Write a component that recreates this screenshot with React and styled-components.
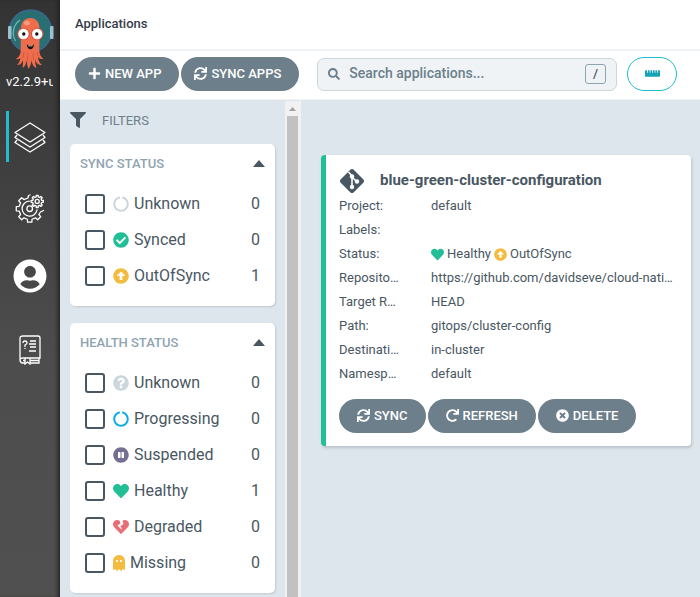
import React from "react";
import styled, { createGlobalStyle } from "styled-components";
import {
  FaPlus, FaSync, FaRedo, FaTimesCircle, FaCircleNotch, FaCheckCircle,
  FaArrowAltCircleUp, FaQuestionCircle, FaPauseCircle, FaHeart,
  FaHeartBroken, FaGhost, FaFilter, FaSearch, FaRulerHorizontal, FaUserCircle,
} from "react-icons/fa";

const color = {
  slate: "#495763",
  button: "#6d7f8b",
  muted: "#8fa4b1",
  ground: "#dee6ed",
  line: "#eff3f6",
  cyan: "#1fbdd0",
  teal: "#22be95",
  amber: "#f4bb41",
};

const GlobalStyle = createGlobalStyle`
  * { box-sizing: border-box; }
  body {
    margin: 0;
    background: ${color.ground};
    color: ${color.slate};
    font-family: Roboto, sans-serif;
    font-size: 13px;
  }
`;

const Shell = styled.div`
  display: grid;
  grid-template-columns: 60px minmax(0, 1fr);
  height: 100vh;
  overflow: hidden;
`;

const Sidebar = styled.nav`
  display: flex;
  flex-direction: column;
  align-items: center;
  padding-top: 9px;
  background: linear-gradient(to bottom, #333333, #4d4d4d 60%, #505050);
  box-shadow: inset -4px 0 4px -2px #23211f;
`;

const Version = styled.div`
  width: 48px;
  height: 20px;
  margin: 2px 0 19px;
  padding-right: 1px;
  overflow: hidden;
  overflow: clip;
  overflow-clip-margin: content-box;
  color: #ffffff;
  line-height: 20px;
  white-space: nowrap;
`;

const NavLink = styled.a`
  display: flex;
  align-items: center;
  justify-content: center;
  align-self: stretch;
  height: 51px;
  margin: 0 6px ${(p) => p.$after || 20}px;
  padding: 3px 3px 0 0;
  border-left: 3px solid ${(p) => (p.$active ? color.cyan : "transparent")};
  color: #ffffff;
`;

const Main = styled.div`
  display: flex;
  flex-direction: column;
  min-width: 0;
  min-height: 0;
`;

const PageTitle = styled.header`
  height: 51px;
  padding: 0 15px;
  border-bottom: 2px solid ${color.line};
  background: #ffffff;
  color: #363c4a;
  font-weight: 500;
  line-height: 48px;
`;

const Toolbar = styled.div`
  display: flex;
  align-items: center;
  height: 49px;
  padding: 0 23px 2px 15px;
  background: #ffffff;
  border-bottom: 1px solid ${color.line};
`;

const Button = styled.button`
  display: inline-flex;
  align-items: center;
  gap: 4px;
  height: 34px;
  padding: 0 18px 2px;
  border: 0;
  border-radius: 17px;
  background: ${color.button};
  color: #ffffff;
  font: 500 13px Roboto, sans-serif;
  white-space: nowrap;
  cursor: pointer;
`;

const ToolbarActions = styled.div`
  display: flex;
  gap: 2px;

  ${Button} { padding: 0 18px 2px 13px; }
`;

const SearchBox = styled.label`
  display: flex;
  flex: 1;
  align-items: center;
  gap: 9px;
  min-width: 0;
  height: 33px;
  margin: 0 10px 0 18px;
  padding: 0 10px;
  border: 1px solid #ccd6dd;
  border-radius: 7px;
  background: ${color.line};
  color: ${color.button};
`;

const SearchInput = styled.input`
  flex: 1;
  min-width: 0;
  padding: 0 0 2px;
  border: 0;
  outline: 0;
  background: transparent;
  color: ${color.slate};
  font: 500 14px Roboto, sans-serif;

  &::placeholder { color: ${color.button}; opacity: 1; }
`;

const Shortcut = styled.kbd`
  width: 21px;
  height: 20px;
  border: 1px solid ${color.muted};
  border-radius: 3px;
  color: ${color.slate};
  font: 500 13px/18px Roboto, sans-serif;
  text-align: center;
`;

const RulerButton = styled.button`
  display: flex;
  align-items: center;
  justify-content: center;
  width: 50px;
  height: 34px;
  padding: 0 0 2px;
  border: 1px solid ${color.cyan};
  border-radius: 17px;
  background: #ffffff;
  color: #16a3b7;
`;

const Body = styled.div`
  display: grid;
  flex: 1;
  grid-template-columns: 241px minmax(0, 1fr);
  min-height: 0;
`;

const FilterPane = styled.aside`
  display: grid;
  grid-template-columns: minmax(0, 1fr) 15px;
  min-height: 0;
  padding-top: 1px;
  border-right: 1px solid ${color.line};
`;

const FilterList = styled.div`
  min-height: 0;
  padding: 9px 10px 0;
  overflow: hidden;
`;

const FilterHeading = styled.div`
  display: flex;
  align-items: center;
  gap: 16px;
  height: 20px;
  margin-bottom: 14px;
  color: ${color.button};

  svg { color: ${color.slate}; }
`;

const ScrollTrack = styled.div`
  display: flex;
  flex-direction: column;
  align-items: center;
  background: #f1f1f1;
`;

const ScrollArrow = styled.div`
  display: flex;
  align-items: center;
  justify-content: center;
  height: 15px;
  color: #a3a3a3;
`;

const ScrollThumb = styled.div`
  flex: 1;
  width: 11px;
  background: #c1c1c1;
`;

const FilterCard = styled.section`
  margin-bottom: 17px;
  padding: 10px 10px 12px;
  border-radius: 5px;
  background: #ffffff;
  box-shadow: 1px 1px 2px rgba(73, 87, 99, 0.2);
`;

const FilterTitle = styled.button`
  display: flex;
  align-items: center;
  justify-content: space-between;
  width: 100%;
  height: 20px;
  margin-bottom: 12px;
  padding: 0 0 2px;
  border: 0;
  background: transparent;
  color: ${color.muted};
  font: 500 13px Roboto, sans-serif;
  text-transform: uppercase;

  svg { color: ${color.slate}; }
`;

const FilterRow = styled.label`
  display: flex;
  align-items: center;
  height: 36px;
  padding: 0 5px;
  font-size: 16px;
`;

const CheckBox = styled.input`
  appearance: none;
  width: 20px;
  height: 20px;
  margin: 0 8px 0 0;
  border: 2px solid ${color.slate};
  border-radius: 3px;

  &:checked { background: ${color.slate}; }
`;

const StatusIcon = styled.span`
  display: inline-flex;
  color: ${(p) => p.$color};

  svg {
    width: ${(p) => p.$width || p.$size}px;
    height: ${(p) => p.$size}px;
  }
`;

const FilterName = styled.span`
  flex: 1;
  margin-left: 5px;
  padding-bottom: 2px;
`;

const FilterCount = styled.span`
  padding-bottom: 2px;
`;

const Content = styled.main`
  min-width: 0;
  padding: 55px 9px 20px 20px;
`;

const AppCard = styled.article`
  padding: 13px 18px 13px 13px;
  border-left: 5px solid ${color.teal};
  border-radius: 4px;
  background: #ffffff;
  box-shadow: 1px 2px 3px rgba(73, 87, 99, 0.25);
`;

const CardHeader = styled.div`
  display: flex;
  align-items: center;
  gap: 15px;
  height: 26px;
`;

const CardTitle = styled.h2`
  margin: 0;
  padding-bottom: 2px;
  font-size: 15px;
  font-weight: 700;
`;

const Details = styled.dl`
  margin: 0 0 13px;
`;

const DetailRow = styled.div`
  display: grid;
  grid-template-columns: 60px minmax(0, 1fr);
  gap: 32px;
  line-height: 24px;
`;

const DetailLabel = styled.dt`
  overflow: hidden;
  text-overflow: ellipsis;
  white-space: nowrap;
`;

const DetailValue = styled.dd`
  margin: 0;
  overflow: hidden;
  text-overflow: ellipsis;
  white-space: nowrap;
`;

const StatusLine = styled.span`
  display: flex;
  align-items: center;
  gap: 3px;
`;

const CardActions = styled.div`
  display: flex;
  gap: 2px;
`;

const Logo = () => (
  <svg width="48" height="61" viewBox="0 0 48 61" aria-label="Argo">
    <circle cx="24.5" cy="22" r="21" fill="#286f73" stroke="#39688c" strokeWidth="1.5" />
    <rect x="2" y="17" width="3.5" height="13" rx="1" fill="#9dbfd2" />
    <rect x="44" y="17" width="3.5" height="13" rx="1" fill="#9dbfd2" />
    <path d="M9.5 32C5.500 25 7 16 14 11" fill="none" stroke="#75b3a9" strokeWidth="1.3" />
    <path d="M15 20c0-7 3.500-11 9.300-11s9.300 4 9.300 11l-.3 21c0 4 1.500 7 4.200 9-3 .2-4.500-.6-5.500-2 .3 3.500 1.500 6 4 8-4 .3-6-2-7-6 0 3 .5 6 1.500 9-3-1-4.500-4-5-8-.2 3-1 6-3 9-1.500-3-1.500-6-1.500-9-1 4-2 6.500-4.500 8 .5-3 .5-5.500.6-8-1 3-3 5-6 5 2-2 3-4.500 3.300-7-1 1-2.500 1.500-4.500 1 3.500-2 4.800-5 4.800-9Z" fill="#ee6d4c" />
    <ellipse cx="21" cy="14" rx="3" ry="2.200" fill="#f49a80" />
    <path d="M18 43l-1 6M22 44l-.5 8M27 44l.5 7M31 43l1.500 5" stroke="#c9553d" strokeWidth=".8" fill="none" />
    <circle cx="17.500" cy="25" r="6.200" fill="#dd573b" />
    <circle cx="31.200" cy="25" r="6.200" fill="#dd573b" />
    <circle cx="17.500" cy="25" r="5.200" fill="#fff" />
    <circle cx="31.200" cy="25" r="5.200" fill="#fff" />
    <circle cx="17.800" cy="25" r="1.700" fill="#111" />
    <circle cx="30.800" cy="25" r="1.700" fill="#111" />
    <path d="M20.800 35.500q3.500 2 7.200 0c0 6-7 6.500-7.200 0Z" fill="#1c1413" />
    <path d="M22.500 36.300q2 .8 4 0v1h-4Z" fill="#fff" />
  </svg>
);

const LayersIcon = () => (
  <svg width="32" height="32" viewBox="0 0 32 32" fill="none" stroke="currentColor" strokeWidth="1.3" strokeLinejoin="round">
    <path d="M16 1 31 10.500 16 20 1 10.500Z" />
    <path d="M3 13 1 15.500l15 9.500 15-9.500-2-2.500" />
    <path d="M3 18 1 20.500l15 9.500 15-9.500-2-2.500" />
  </svg>
);

const toothPoints = (cx, cy, inner, outer, teeth, from, to) => {
  const points = [];
  for (let i = from; i < to; i += 1) {
    [[-0.28, inner], [-0.2, outer], [0.2, outer], [0.28, inner]].forEach(([offset, radius]) => {
      const angle = ((i + offset) * Math.PI * 2) / teeth;
      points.push(`${(cx + radius * Math.cos(angle)).toFixed(2)} ${(cy + radius * Math.sin(angle)).toFixed(2)}`);
    });
  }
  return points.join("L");
};

const GearsIcon = () => (
  <svg width="30" height="30" viewBox="0 0 30 30" fill="none" stroke="currentColor" strokeWidth="1.3" strokeLinejoin="round" strokeLinecap="round">
    <path d={`M28.500 16.500L25.500 18L${toothPoints(14.7, 14.7, 10.8, 13.6, 8, 1, 6)}L13 4L13.500 1.500L15 1`} />
    <path d="M14.200 7.200A7.500 7.500 0 1 0 22 16" />
    <circle cx="14.7" cy="14.7" r="2.800" />
    <path d={`M${toothPoints(22.2, 7.4, 4.6, 6.2, 8, 0, 8)}Z`} />
    <circle cx="22.2" cy="7.4" r="2" />
  </svg>
);

const BookIcon = () => (
  <svg width="22" height="30" viewBox="0 0 22 30" fill="none" stroke="currentColor" strokeWidth="1.3">
    <path d="M4 1h15q2 0 2 2v20H4q-3 0-3 2V3q0-2 3-2ZM1 25q0 3 3 3h2m5 0h9V23M4 25.5h2m5 0h9" />
    <path d="M6 23v6l2.5-2 2.500 2v-6" />
    <path d="M4 8q0-2 2-2t2 2q0 1-2 2v2m0 1v1M11 6h6m-7 3h7m-6 3h6M10 16h7" />
  </svg>
);

const GitIcon = () => (
  <svg width="26" height="26" viewBox="0 0 26 26" aria-hidden="true">
    <path d="M11.5 1.6q1.500-1.400 3 0l10 10q1.400 1.400 0 2.800l-10 10q-1.500 1.400-3 0l-10-10q-1.400-1.400 0-2.800Z" fill={color.slate} />
    <path d="m9.500 4 3.500 4v12M13 9l5 5" fill="none" stroke="#fff" strokeWidth="1.6" />
    <circle cx="13" cy="8.500" r="2.200" fill="#fff" />
    <circle cx="18" cy="13.500" r="2.200" fill="#fff" />
    <circle cx="13" cy="19" r="2.200" fill="#fff" />
  </svg>
);

const Triangle = ({ width, height }) => (
  <svg width={width} height={height} viewBox="0 0 12 7" preserveAspectRatio="none" aria-hidden="true">
    <path d="M6 0 12 7H0Z" fill="currentColor" />
  </svg>
);

const syncFilters = [
  { name: "Unknown", count: 0, Icon: FaCircleNotch, tint: "#ccd6dd" },
  { name: "Synced", count: 0, Icon: FaCheckCircle, tint: color.teal },
  { name: "OutOfSync", count: 1, Icon: FaArrowAltCircleUp, tint: color.amber },
];

const healthFilters = [
  { name: "Unknown", count: 0, Icon: FaQuestionCircle, tint: "#ccd6dd" },
  { name: "Progressing", count: 0, Icon: FaCircleNotch, tint: "#0dadea" },
  { name: "Suspended", count: 0, Icon: FaPauseCircle, tint: "#766f94" },
  { name: "Healthy", count: 1, Icon: FaHeart, tint: color.teal },
  { name: "Degraded", count: 0, Icon: FaHeartBroken, tint: "#e96d76" },
  { name: "Missing", count: 0, Icon: FaGhost, tint: color.amber, iconWidth: 12 },
];

const details = [
  ["Project:", "default"],
  ["Labels:", "\u00a0"],
  ["Status:", (
    <StatusLine>
      <StatusIcon $color={color.teal} $size={13}><FaHeart /></StatusIcon>
      Healthy
      <StatusIcon $color={color.amber} $size={13}><FaArrowAltCircleUp /></StatusIcon>
      OutOfSync
    </StatusLine>
  )],
  ["Repository:", "https://github.com/davidseve/cloud-native-deployment"],
  ["Target Revision:", "HEAD"],
  ["Path:", "gitops/cluster-config"],
  ["Destination:", "in-cluster"],
  ["Namespace:", "default"],
];

const FilterGroup = ({ title, items }) => (
  <FilterCard>
    <FilterTitle type="button" aria-expanded="true">
      {title}
      <Triangle width={12} height={7} />
    </FilterTitle>
    {items.map(({ name, count, Icon, tint, iconWidth }) => (
      <FilterRow key={name}>
        <CheckBox type="checkbox" />
        <StatusIcon $color={tint} $size={16} $width={iconWidth}><Icon /></StatusIcon>
        <FilterName>{name}</FilterName>
        <FilterCount>{count}</FilterCount>
      </FilterRow>
    ))}
  </FilterCard>
);

export default function App() {
  return (
    <>
      <GlobalStyle />
      <Shell>
        <Sidebar>
          <Logo />
          <Version>v2.2.9+unknown</Version>
          <NavLink href="#applications" aria-label="Applications" $active><LayersIcon /></NavLink>
          <NavLink href="#settings" aria-label="Settings" $after={16}><GearsIcon /></NavLink>
          <NavLink href="#user" aria-label="User info" $after={23}><FaUserCircle size={34} /></NavLink>
          <NavLink href="#help" aria-label="Documentation"><BookIcon /></NavLink>
        </Sidebar>
        <Main>
          <PageTitle>Applications</PageTitle>
          <Toolbar>
            <ToolbarActions>
              <Button type="button"><FaPlus />NEW APP</Button>
              <Button type="button"><FaSync />SYNC APPS</Button>
            </ToolbarActions>
            <SearchBox>
              <FaSearch size={12} />
              <SearchInput type="text" placeholder="Search applications..." aria-label="Search applications" />
              <Shortcut>/</Shortcut>
            </SearchBox>
            <RulerButton type="button" aria-label="Compact view"><FaRulerHorizontal size={15} /></RulerButton>
          </Toolbar>
          <Body>
            <FilterPane>
              <FilterList>
                <FilterHeading><FaFilter size={16} />FILTERS</FilterHeading>
                <FilterGroup title="Sync Status" items={syncFilters} />
                <FilterGroup title="Health Status" items={healthFilters} />
              </FilterList>
              <ScrollTrack aria-hidden="true">
                <ScrollArrow><Triangle width={7} height={4} /></ScrollArrow>
                <ScrollThumb />
              </ScrollTrack>
            </FilterPane>
            <Content>
              <AppCard>
                <CardHeader>
                  <GitIcon />
                  <CardTitle>blue-green-cluster-configuration</CardTitle>
                </CardHeader>
                <Details>
                  {details.map(([label, value]) => (
                    <DetailRow key={label}>
                      <DetailLabel>{label}</DetailLabel>
                      <DetailValue>{value}</DetailValue>
                    </DetailRow>
                  ))}
                </Details>
                <CardActions>
                  <Button type="button"><FaSync />SYNC</Button>
                  <Button type="button"><FaRedo />REFRESH</Button>
                  <Button type="button"><FaTimesCircle />DELETE</Button>
                </CardActions>
              </AppCard>
            </Content>
          </Body>
        </Main>
      </Shell>
    </>
  );
}
